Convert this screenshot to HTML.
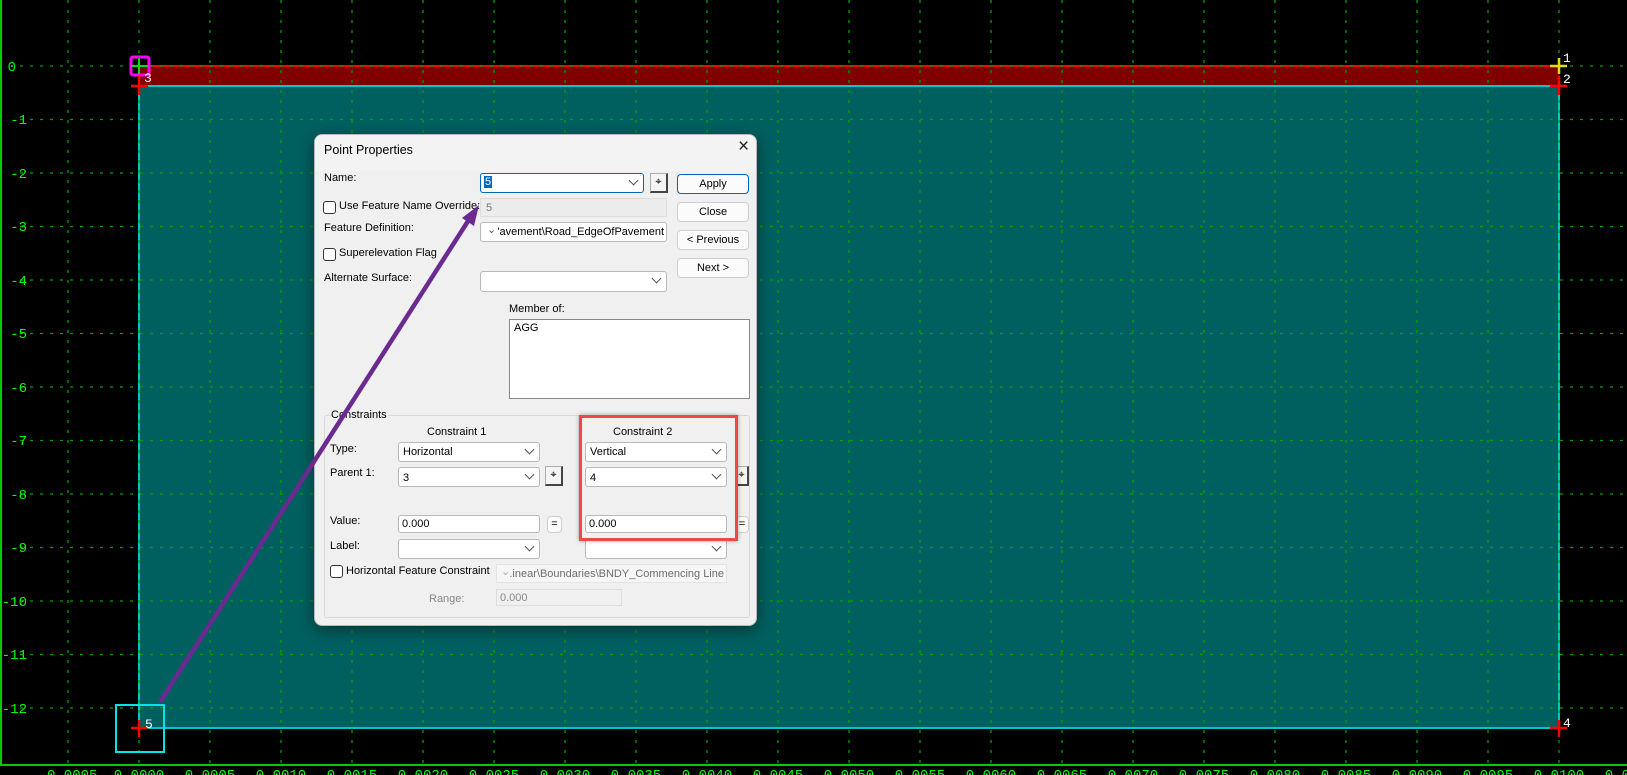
<!DOCTYPE html>
<html><head><meta charset="utf-8">
<style>
*{box-sizing:border-box;margin:0;padding:0}
body{width:1627px;height:775px;background:#000;overflow:hidden;position:relative;font-family:"Liberation Sans",sans-serif;font-size:11px;color:#000}
svg.bg{position:absolute;left:0;top:0}
.dlg{position:absolute;left:314px;top:134px;width:443px;height:492px;background:#f0f0f0;border:1px solid #b8b8b8;border-radius:8px;box-shadow:0 4px 16px rgba(0,0,0,.45);overflow:hidden}
.a{position:absolute;white-space:nowrap}
.box{position:absolute;background:#fff;border:1px solid #b9b9b9;border-radius:3px}
.btn{position:absolute;background:#fbfbfb;border:1px solid #cfcfcf;border-radius:4px;text-align:center;line-height:18px}
.chk{position:absolute;width:13px;height:13px;border:1px solid #333;border-radius:3px;background:#fff}
.dd{position:absolute;right:6px;top:3px;width:7px;height:7px;border-right:1px solid #555;border-bottom:1px solid #555;transform:rotate(45deg);}
.pk{position:absolute;background:#f4f4f4;border:1px solid #adadad;border-bottom:2px solid #444;border-right:2px solid #444}
</style></head><body>
<svg class="bg" width="1627" height="775">
<rect x="139" y="66" width="1420" height="20" fill="#800000"/>
<line x1="139" y1="66" x2="1559" y2="66" stroke="#ff0000" stroke-width="2"/>
<rect x="139" y="86" width="1420" height="642" fill="#006060"/>
<g stroke="#00c8c8" stroke-width="2" fill="none"><polyline points="139,86 1559,86 1559,728 139,728 139,86"/></g>
<g stroke="#00a000" stroke-width="1.3" stroke-dasharray="3,7">
<line x1="68" y1="0" x2="68" y2="765"/><line x1="139" y1="0" x2="139" y2="765"/><line x1="210" y1="0" x2="210" y2="765"/><line x1="281" y1="0" x2="281" y2="765"/><line x1="352" y1="0" x2="352" y2="765"/><line x1="423" y1="0" x2="423" y2="765"/><line x1="494" y1="0" x2="494" y2="765"/><line x1="565" y1="0" x2="565" y2="765"/><line x1="636" y1="0" x2="636" y2="765"/><line x1="707" y1="0" x2="707" y2="765"/><line x1="778" y1="0" x2="778" y2="765"/><line x1="849" y1="0" x2="849" y2="765"/><line x1="920" y1="0" x2="920" y2="765"/><line x1="991" y1="0" x2="991" y2="765"/><line x1="1062" y1="0" x2="1062" y2="765"/><line x1="1133" y1="0" x2="1133" y2="765"/><line x1="1204" y1="0" x2="1204" y2="765"/><line x1="1275" y1="0" x2="1275" y2="765"/><line x1="1346" y1="0" x2="1346" y2="765"/><line x1="1417" y1="0" x2="1417" y2="765"/><line x1="1488" y1="0" x2="1488" y2="765"/><line x1="1559" y1="0" x2="1559" y2="765"/>
<line x1="20" y1="66" x2="1627" y2="66"/><line x1="20" y1="119.5" x2="1627" y2="119.5"/><line x1="20" y1="173" x2="1627" y2="173"/><line x1="20" y1="226.5" x2="1627" y2="226.5"/><line x1="20" y1="280" x2="1627" y2="280"/><line x1="20" y1="333.5" x2="1627" y2="333.5"/><line x1="20" y1="387" x2="1627" y2="387"/><line x1="20" y1="440.5" x2="1627" y2="440.5"/><line x1="20" y1="494" x2="1627" y2="494"/><line x1="20" y1="547.5" x2="1627" y2="547.5"/><line x1="20" y1="601" x2="1627" y2="601"/><line x1="20" y1="654.5" x2="1627" y2="654.5"/><line x1="20" y1="708" x2="1627" y2="708"/>
</g>
<line x1="1" y1="0" x2="1" y2="765" stroke="#00cc00" stroke-width="2"/>
<line x1="0" y1="765" x2="1627" y2="765" stroke="#00cc00" stroke-width="2"/>
<rect x="131" y="57" width="18" height="18" rx="2" fill="none" stroke="#ff00ff" stroke-width="3"/>
<g stroke="#00dd00" stroke-width="2"><line x1="131" y1="66" x2="148" y2="66"/><line x1="139" y1="58" x2="139" y2="74"/></g>
<g stroke="#ff0000" stroke-width="2.5"><line x1="131" y1="86" x2="148" y2="86"/><line x1="139" y1="76" x2="139" y2="95"/>
<line x1="1550" y1="86" x2="1567" y2="86"/><line x1="1559" y1="76" x2="1559" y2="95"/>
<line x1="1550" y1="728" x2="1567" y2="728"/><line x1="1559" y1="720" x2="1559" y2="737"/>
<line x1="131" y1="728" x2="148" y2="728"/><line x1="139" y1="720" x2="139" y2="737"/></g>
<g stroke="#e0e000" stroke-width="2.5"><line x1="1550" y1="66" x2="1567" y2="66"/><line x1="1559" y1="58" x2="1559" y2="74"/></g>
<rect x="116" y="705" width="48" height="47" fill="none" stroke="#00e5e5" stroke-width="2"/>
<g fill="#fff" font-family="Liberation Mono,monospace" font-size="13">
<text x="144" y="82">3</text><text x="1563" y="62">1</text><text x="1563" y="83">2</text><text x="1563" y="727">4</text><text x="145" y="728">5</text></g>
<g fill="#00ff00" font-family="Liberation Mono,monospace" font-size="14" text-anchor="end">
<text x="16" y="71">0</text><text x="27" y="124">-1</text><text x="27" y="178">-2</text><text x="27" y="231">-3</text><text x="27" y="285">-4</text><text x="27" y="338">-5</text><text x="27" y="392">-6</text><text x="27" y="445">-7</text><text x="27" y="499">-8</text><text x="27" y="552">-9</text><text x="27" y="606">-10</text><text x="27" y="659">-11</text><text x="27" y="713">-12</text></g>
<g fill="#00ff00" font-family="Liberation Mono,monospace" font-size="14" text-anchor="middle">
<text x="68" y="779">-0.0005</text><text x="139" y="779">0.0000</text><text x="210" y="779">0.0005</text><text x="281" y="779">0.0010</text><text x="352" y="779">0.0015</text><text x="423" y="779">0.0020</text><text x="494" y="779">0.0025</text><text x="565" y="779">0.0030</text><text x="636" y="779">0.0035</text><text x="707" y="779">0.0040</text><text x="778" y="779">0.0045</text><text x="849" y="779">0.0050</text><text x="920" y="779">0.0055</text><text x="991" y="779">0.0060</text><text x="1062" y="779">0.0065</text><text x="1133" y="779">0.0070</text><text x="1204" y="779">0.0075</text><text x="1275" y="779">0.0080</text><text x="1346" y="779">0.0085</text><text x="1417" y="779">0.0090</text><text x="1488" y="779">0.0095</text><text x="1559" y="779">0.0100</text><text x="1630" y="779">0.0105</text></g>
</svg>

<div class="dlg">
<div class="a" style="left:0;top:0;width:443px;height:36px;background:#f3f3f3"></div>
<div class="a" style="left:9px;top:8px;font-size:12.5px">Point Properties</div>
<div class="a" style="left:423px;top:1px;font-size:19px;color:#222">×</div>

<div class="a" style="left:9px;top:37px">Name:</div>
<div class="box" style="left:165px;top:38px;width:164px;height:20px;border:1px solid #0067c0"><span style="position:absolute;left:3px;top:2px;background:#0067c0;color:#fff;padding:0 1px">5</span><div class="dd"></div></div>
<div class="pk" style="left:335px;top:38px;width:18px;height:20px;text-align:center;line-height:16px">⌖</div>
<div class="btn" style="left:362px;top:39px;width:72px;height:20px;border:1.5px solid #0067c0">Apply</div>
<div class="btn" style="left:362px;top:67px;width:72px;height:20px">Close</div>
<div class="btn" style="left:362px;top:95px;width:72px;height:20px">&lt; Previous</div>
<div class="btn" style="left:362px;top:123px;width:72px;height:20px">Next &gt;</div>

<div class="chk" style="left:8px;top:66px"></div>
<div class="a" style="left:24px;top:65px">Use Feature Name Override:</div>
<div class="a" style="left:165px;top:63px;width:187px;height:19px;background:#ececec;border:1px solid #ddd;color:#777;padding:3px 5px">5</div>
<div class="a" style="left:9px;top:87px">Feature Definition:</div>
<div class="box" style="left:165px;top:87px;width:187px;height:20px;overflow:hidden"><span style="position:absolute;left:6px;top:0px;color:#555">⌄</span><span style="position:absolute;right:2px;top:3px">'avement\Road_EdgeOfPavement</span></div>
<div class="chk" style="left:8px;top:113px"></div>
<div class="a" style="left:24px;top:112px">Superelevation Flag</div>
<div class="a" style="left:9px;top:137px">Alternate Surface:</div>
<div class="box" style="left:165px;top:136px;width:187px;height:21px"><div class="dd"></div></div>

<div class="a" style="left:194px;top:168px">Member of:</div>
<div class="a" style="left:194px;top:184px;width:241px;height:80px;background:#fff;border:1px solid #888;padding:2px 4px">AGG</div>

<div class="a" style="left:9px;top:280px;width:426px;height:203px;border:1px solid #d8d8d8;border-radius:3px"></div>
<div class="a" style="left:15px;top:274px;background:#f0f0f0;padding:0 1px">Constraints</div>
<div class="a" style="left:112px;top:291px">Constraint 1</div>
<div class="a" style="left:298px;top:291px">Constraint 2</div>
<div class="a" style="left:15px;top:308px">Type:</div>
<div class="box" style="left:83px;top:307px;width:142px;height:20px;padding:3px 4px">Horizontal<div class="dd"></div></div>
<div class="box" style="left:270px;top:307px;width:142px;height:20px;padding:3px 4px">Vertical<div class="dd"></div></div>
<div class="a" style="left:15px;top:332px">Parent 1:</div>
<div class="box" style="left:83px;top:332px;width:142px;height:20px;padding:4px 4px">3<div class="dd"></div></div>
<div class="pk" style="left:230px;top:331px;width:18px;height:20px;text-align:center;line-height:16px">⌖</div>
<div class="box" style="left:270px;top:332px;width:142px;height:20px;padding:4px 4px">4<div class="dd"></div></div>
<div class="pk" style="left:420px;top:331px;width:14px;height:20px;text-align:center;line-height:16px">⌖</div>
<div class="a" style="left:15px;top:380px">Value:</div>
<div class="box" style="left:83px;top:380px;width:142px;height:18px;padding:2px 3px">0.000</div>
<div class="btn" style="left:232px;top:381px;width:15px;height:17px;line-height:15px">=</div>
<div class="box" style="left:270px;top:380px;width:142px;height:18px;padding:2px 3px">0.000</div>
<div class="btn" style="left:420px;top:381px;width:14px;height:17px;line-height:15px">=</div>
<div class="a" style="left:15px;top:405px">Label:</div>
<div class="box" style="left:83px;top:404px;width:142px;height:20px"><div class="dd"></div></div>
<div class="box" style="left:270px;top:404px;width:142px;height:20px"><div class="dd"></div></div>
<div class="a" style="left:264px;top:280px;width:159px;height:126px;border:3px solid #f04848;box-shadow:0 0 4px rgba(0,0,0,.35)"></div>
<div class="chk" style="left:15px;top:430px"></div>
<div class="a" style="left:31px;top:430px">Horizontal Feature Constraint</div>
<div class="a" style="left:181px;top:429px;width:231px;height:19px;background:#f6f6f6;border:1px solid #e4e4e4;color:#6d6d6d;overflow:hidden"><span style="position:absolute;left:4px;top:0;color:#aaa">⌄</span><span style="position:absolute;right:2px;top:3px">.inear\Boundaries\BNDY_Commencing Line</span></div>
<div class="a" style="left:114px;top:458px;color:#888">Range:</div>
<div class="a" style="left:181px;top:454px;width:126px;height:17px;background:#f0f0f0;border:1px solid #ddd;color:#888;padding:2px 3px">0.000</div>
</div>

<svg class="bg" width="1627" height="775" style="pointer-events:none">
<line x1="160" y1="702" x2="470" y2="218" stroke="#6a2a8f" stroke-width="4.5"/>
<polygon points="479,205 462,218 474,226" fill="#6a2a8f"/>
</svg>
</body></html>
